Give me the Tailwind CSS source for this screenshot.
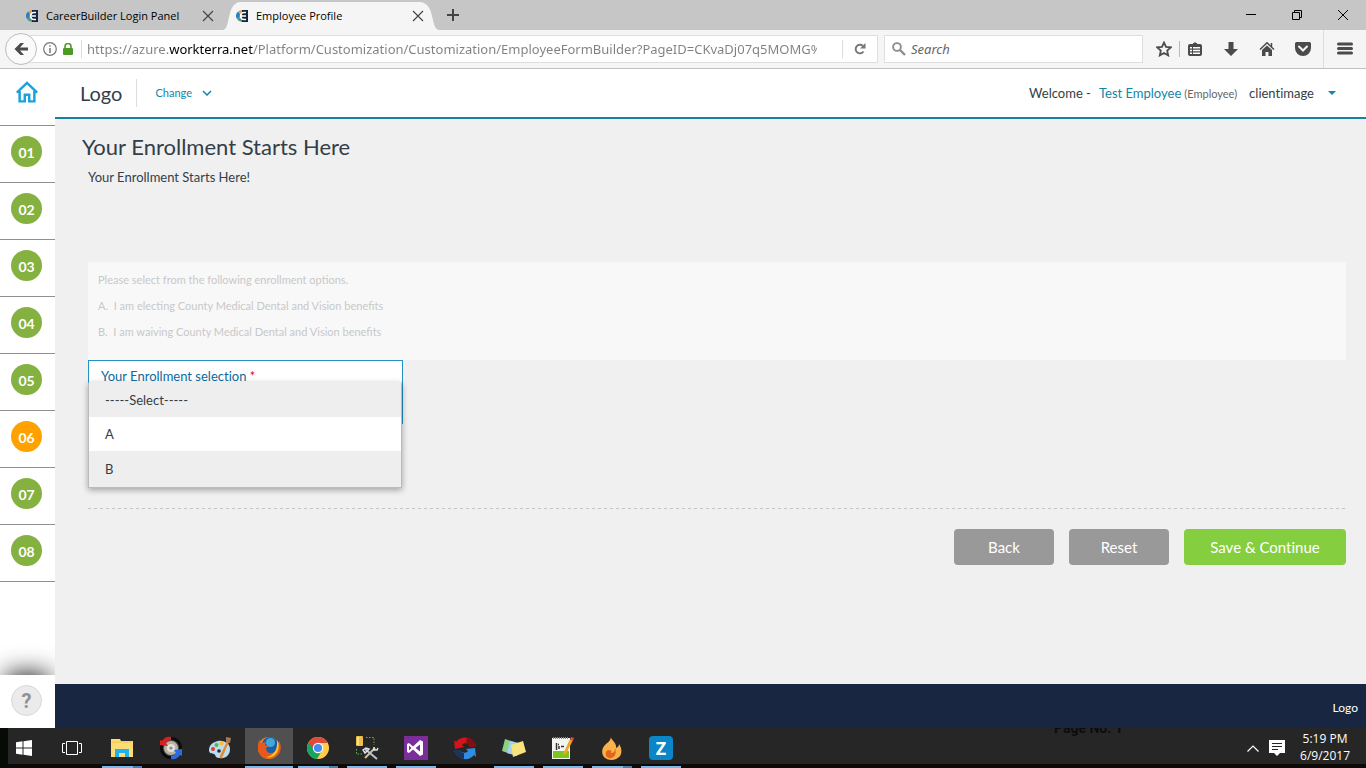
<!DOCTYPE html>
<html lang="en">
<head>
  <meta charset="UTF-8">
  <title>Employee Profile</title>
  <meta name="viewport" content="width=device-width, initial-scale=1.0">
  <script src="https://cdn.jsdelivr.net/npm/@tailwindcss/browser@4"></script>
</head>
<body class="flex flex-col h-screen overflow-hidden bg-[#f0f0f0] font-['Lato',sans-serif] text-[#333e48] [font-variant-ligatures:none]">

<!-- Shared icons -->
<svg class="hidden">
  <symbol id="favicon" viewBox="0 0 12 12">
    <path d="M6 0h6v12H6z" fill="#14263f"/>
    <path d="M6 0A6 6 0 0 0 2 1.500L5 5l1-1z" fill="#e9a13a"/>
    <path d="M2 1.500A6 6 0 0 0 1 9l3-2V4z" fill="#2a7fc0"/>
    <path d="M1 9a6 6 0 0 0 5 3V8L4 7z" fill="#4b9a86"/>
    <path d="M10 2.500H8a3.500 3.500 0 0 0 0 7h2M6 6h4" stroke="#fff" stroke-width="1.600" fill="none"/>
  </symbol>
  <symbol id="close" viewBox="0 0 12 12">
    <path d="M1 1l10 10M11 1L1 11" stroke="currentColor" stroke-width="1.200"/>
  </symbol>
</svg>

<!-- Tab strip -->
<div class="flex items-center h-[30px] shrink-0 bg-[#c6c6c6] font-['Open_Sans','Noto_Sans',sans-serif] text-[11px] text-black">
  <div class="flex items-center w-[223px] h-full pt-[2px] pl-[26px] pr-[9px]">
    <svg class="size-3 mr-2"><use href="#favicon"/></svg>
    <span class="flex-1 whitespace-nowrap">CareerBuilder Login Panel</span>
    <button aria-label="Close tab" class="text-[#444]"><svg class="size-3"><use href="#close"/></svg></button>
  </div>
  <div class="relative flex items-center w-[216px] h-full pt-[2px] pl-[13px] pr-[15px]">
    <svg class="absolute inset-0 size-full" viewBox="0 0 216 30" preserveAspectRatio="none">
      <path d="M0 30C8 29 3 2 18 2H196C213 2 207 29 216 30z" fill="#f5f5f5"/>
    </svg>
    <svg class="relative size-3 mr-2"><use href="#favicon"/></svg>
    <span class="relative flex-1 whitespace-nowrap">Employee Profile</span>
    <button aria-label="Close tab" class="relative text-[#444]"><svg class="size-3"><use href="#close"/></svg></button>
  </div>
  <button aria-label="New tab" class="ml-2">
    <svg class="size-3" viewBox="0 0 12 12"><path d="M6 0v12M0 6h12" stroke="#444" stroke-width="2"/></svg>
  </button>
  <div class="flex items-center gap-9 ml-auto pr-[18px]">
    <button aria-label="Minimize"><svg class="size-[10px]" viewBox="0 0 10 10"><path d="M0 4.500h10" stroke="#000"/></svg></button>
    <button aria-label="Restore">
      <svg class="size-[10px]" viewBox="0 0 10 10"><path d="M.5 2.500h7v7h-7zM2.500 2.500v-2h7v7h-2" stroke="#000" fill="none"/></svg>
    </button>
    <button aria-label="Close window"><svg class="size-[10px]" viewBox="0 0 10 10"><path d="M0 0l10 10M10 0L0 10" stroke="#000"/></svg></button>
  </div>
</div>

<!-- Address bar -->
<div class="flex items-center h-[39px] shrink-0 pl-[5px] bg-[#f5f5f5] border-b border-[#c1c1c1] font-['Noto_Sans','Open_Sans',sans-serif] text-[13px]">
  <button aria-label="Go back" class="relative z-10 flex items-center justify-center size-8 shrink-0 rounded-full border border-[#bdbdbd] bg-[#fafafa]">
    <svg class="w-[14px] h-3" viewBox="0 0 14 12"><path d="M6.500 0H10L6 4.500h8v3H6l4 4.500H6.500L.5 6z" fill="#4b4b4b"/></svg>
  </button>
  <div class="flex items-center flex-1 h-7 -ml-4 pl-[21px] bg-white border border-[#dedede]">
    <svg class="size-[14px] shrink-0" viewBox="0 0 14 14">
      <circle cx="7" cy="7" r="6.300" fill="none" stroke="#777" stroke-width="1.200"/>
      <path d="M7 6v5M7 3.200v1.500" stroke="#777" stroke-width="1.500"/>
    </svg>
    <svg class="w-[10px] h-3 ml-[6px] shrink-0" viewBox="0 0 10 12">
      <path d="M2 6V3.500a3 3 0 0 1 6 0V6" fill="none" stroke="#4d9a26" stroke-width="1.600"/>
      <rect y="5" width="10" height="7" rx="1" fill="#4d9a26"/>
    </svg>
    <span class="w-px h-[18px] ml-2 mr-[5px] bg-[#ddd]"></span>
    <input type="text" aria-label="Address" value="https://azure.workterra.net/Platform/Customization/Customization/EmployeeFormBuilder?PageID=CKvaDj07q5MOMG%"
           class="flex-1 min-w-0 mr-[25px] pt-[2px] outline-none text-transparent bg-clip-text bg-[linear-gradient(90deg,#808080_82px,#000_82px,#000_166px,#808080_166px)]">
    <span class="w-px h-[18px] bg-[#ddd]"></span>
    <button aria-label="Reload" class="flex items-center justify-center w-[34px] h-full">
      <svg class="size-3" viewBox="0 0 12 12"><path d="M9.500 8.500A4.300 4.300 0 1 1 8.800 2.800" fill="none" stroke="#777" stroke-width="1.900"/><path d="M11.500 0v5.500H6z" fill="#777"/></svg>
    </button>
  </div>
  <div class="flex items-center w-[259px] h-7 ml-[6px] pl-[7px] bg-white border border-[#dedede]">
    <svg class="size-[14px] shrink-0" viewBox="0 0 14 14"><circle cx="5" cy="5" r="3.900" fill="none" stroke="#8c8c8c" stroke-width="1.900"/><path d="M8 8l5 5" stroke="#8c8c8c" stroke-width="2.400"/></svg>
    <input type="search" aria-label="Search" placeholder="Search" class="flex-1 min-w-0 ml-[5px] pt-[2px] outline-none italic placeholder:text-[#666]">
  </div>
  <button aria-label="Bookmark this page" class="ml-[13px]">
    <svg class="size-4" viewBox="0 0 16 16"><path d="M8 1.500l2 4.400 4.800.5-3.600 3.200 1 4.800L8 12l-4.200 2.400 1-4.800L1.200 6.400 6 5.900z" fill="none" stroke="#4b4b4b" stroke-width="1.800"/></svg>
  </button>
  <span class="w-px h-4 ml-[7px] mr-2 bg-[#bbb]"></span>
  <button aria-label="Bookmarks list">
    <svg class="w-[14px] h-4" viewBox="0 0 14 16">
      <path d="M5 3V2h1L7 1l1 1h1v1h3a2 2 0 0 1 2 2v8a2 2 0 0 1-2 2H2a2 2 0 0 1-2-2V5a2 2 0 0 1 2-2z" fill="#4b4b4b"/>
      <path d="M2 6h2v1.500H2zM5 6h7v1.500H5zM2 8.700h2v1.500H2zM5 8.700h7v1.500H5zM2 11.400h2v1.500H2zM5 11.400h7v1.500H5z" fill="#fff"/>
    </svg>
  </button>
  <button aria-label="Downloads" class="ml-[22px]">
    <svg class="w-[14px] h-4" viewBox="0 0 14 16"><path d="M4.500 1h5v7H14l-7 7-7-7h4.500z" fill="#4b4b4b"/></svg>
  </button>
  <button aria-label="Home" class="ml-[21px]">
    <svg class="size-4" viewBox="0 0 16 16"><path d="M3 9l5-4.500L13 9v6H9.500v-4h-3v4H3z" fill="#4b4b4b"/><path d="M1 8.500l7-6.700 7 6.700M12.500 2v4" fill="none" stroke="#4b4b4b" stroke-width="1.500"/></svg>
  </button>
  <button aria-label="Save to Pocket" class="ml-5">
    <svg class="size-4" viewBox="0 0 16 16"><path d="M1.500 1h13A1.500 1.500 0 0 1 16 2.500V7A8 8 0 0 1 0 7V2.500A1.500 1.500 0 0 1 1.500 1z" fill="#4b4b4b"/><path d="M4 5.500l4 4 4-4" fill="none" stroke="#f5f5f5" stroke-width="2" stroke-linecap="round"/></svg>
  </button>
  <span class="w-px h-full ml-3 bg-[#ddd]"></span>
  <button aria-label="Open menu" class="ml-[13px] mr-[13px]">
    <svg class="size-4" viewBox="0 0 16 16"><path d="M1.500 3h13M1.500 7.500h13M1.500 12h13" stroke="#4b4b4b" stroke-width="3" stroke-linecap="round"/></svg>
  </button>
</div>

<div class="flex flex-1 min-h-0">

  <!-- Step sidebar -->
  <nav class="flex flex-col w-[55px] shrink-0 bg-white overflow-hidden text-sm font-bold text-white">
    <a href="#" aria-label="Home" class="flex h-[57px] pl-4 pt-3 border-b border-[#919191]">
      <svg class="w-[22px] h-[22px]" viewBox="0 0 23 22">
        <path d="M.8 11.700L11.500 1.500l10.700 10.200M3.800 10v10.800h5.400v-7h4.600v7h5.400V10" fill="none" stroke="#1ba1dc" stroke-width="2.600"/>
      </svg>
    </a>
    <a href="#" class="flex h-[57px] pl-[11px] pt-[10px] border-b border-[#919191]"><span class="size-[31px] rounded-full bg-[#84b140] text-center leading-[34px]">01</span></a>
    <a href="#" class="flex h-[57px] pl-[11px] pt-[10px] border-b border-[#919191]"><span class="size-[31px] rounded-full bg-[#84b140] text-center leading-[34px]">02</span></a>
    <a href="#" class="flex h-[57px] pl-[11px] pt-[10px] border-b border-[#919191]"><span class="size-[31px] rounded-full bg-[#84b140] text-center leading-[34px]">03</span></a>
    <a href="#" class="flex h-[57px] pl-[11px] pt-[10px] border-b border-[#919191]"><span class="size-[31px] rounded-full bg-[#84b140] text-center leading-[34px]">04</span></a>
    <a href="#" class="flex h-[57px] pl-[11px] pt-[10px] border-b border-[#919191]"><span class="size-[31px] rounded-full bg-[#84b140] text-center leading-[34px]">05</span></a>
    <a href="#" class="flex h-[57px] pl-[11px] pt-[10px] border-b border-[#919191]"><span class="size-[31px] rounded-full bg-[#ffa200] text-center leading-[34px]">06</span></a>
    <a href="#" class="flex h-[57px] pl-[11px] pt-[10px] border-b border-[#919191]"><span class="size-[31px] rounded-full bg-[#84b140] text-center leading-[34px]">07</span></a>
    <a href="#" class="flex h-[57px] pl-[11px] pt-[10px] border-b border-[#919191]"><span class="size-[31px] rounded-full bg-[#84b140] text-center leading-[34px]">08</span></a>
    <div class="flex h-[53px] mt-auto pl-[11px] pt-[10px] bg-white shadow-[0_-8px_24px_-6px_#222]">
      <button class="size-[31px] rounded-full border border-[#d8d8d8] bg-[#ebebeb] font-['Roboto',sans-serif] text-xl leading-7 text-[#919191]">?</button>
    </div>
  </nav>

  <div class="flex flex-col flex-1 min-w-0">
    <header class="flex items-center h-[50px] shrink-0 pl-[25px] pr-[30px] bg-white border-b-2 border-[#1681a0] text-[13px]">
      <span class="text-xl">Logo</span>
      <span class="w-px h-7 ml-[14px] mr-[18px] bg-[#ddd]"></span>
      <button class="flex items-center gap-[10px] text-[11px] text-[#0f86ab]">
        Change
        <svg class="w-[10px] h-[6px]" viewBox="0 0 10 6"><path d="M1 1l4 4 4-4" fill="none" stroke="#0f86ab" stroke-width="1.500"/></svg>
      </button>
      <div class="flex items-baseline ml-auto pt-[2px]">
        <span>Welcome -</span>
        <a href="#" class="ml-2 text-[#0f86ab]">Test Employee</a>
        <span class="ml-[3px] text-[11px] text-[#666]">(Employee)</span>
        <span class="ml-3">clientimage</span>
      </div>
      <button aria-label="Account menu" class="ml-[14px]">
        <svg class="w-2 h-1" viewBox="0 0 8 4"><path d="M0 0h8L4 4z" fill="#0f86ab"/></svg>
      </button>
    </header>

    <main class="flex-1 min-h-0 pl-[33px] pr-5 pt-4">
      <h1 class="-ml-[6px] text-[22px] leading-6">Your Enrollment Starts Here</h1>
      <p class="mt-2 text-[13px] leading-5">Your Enrollment Starts Here!</p>

      <div class="h-[98px] mt-[75px] px-[10px] pt-[5px] bg-[#f8f8f8] text-[11px] leading-[26px] text-[#c8c8c8] [font-variant-ligatures:normal]">
        <p>Please select from the following enrollment options.</p>
        <p>A.&nbsp; I am electing County Medical Dental and Vision benefits</p>
        <p>B.&nbsp; I am waiving County Medical Dental and Vision benefits</p>
      </div>

      <form>
        <div class="relative w-[315px] h-16 px-3 pt-[5px] bg-white border border-[#2490c4] text-[13px]">
          <label for="selection" class="block leading-5 text-[#0f6a9b]">Your Enrollment selection <span class="text-[#f00030]">*</span></label>
          <!-- open option list -->
          <select id="selection" size="3" class="absolute -left-px right-0 top-[21px] h-[106px] overflow-hidden appearance-none outline-none bg-white border border-t-0 border-[#bbb] rounded-t-xs shadow-[0_2px_6px_#0005]">
            <option class="h-[35px] px-4 pt-[10px] leading-5 bg-[#eee]">-----Select-----</option>
            <option class="h-[34px] px-4 pt-[9px] leading-5 bg-white">A</option>
            <option class="h-9 px-4 pt-[10px] leading-5 bg-[#eee]">B</option>
          </select>
        </div>
        <svg class="block w-full h-px mt-[84px]"><path d="M0 .5h3000" stroke="#c4c4c4" stroke-dasharray="3 3"/></svg>
        <div class="flex justify-end gap-[15px] mt-5 text-[15px] text-white">
          <button type="button" class="w-[100px] h-9 rounded bg-[#999]">Back</button>
          <button type="reset" class="w-[100px] h-9 rounded bg-[#999]">Reset</button>
          <button type="submit" class="w-[162px] h-9 rounded bg-[#85ce40]">Save &amp; Continue</button>
        </div>
      </form>
    </main>

    <footer class="flex items-center justify-end h-11 shrink-0 pr-2 pt-1 bg-[#182641] text-xs text-white">Logo</footer>
  </div>
</div>

<!-- Taskbar -->
<div class="relative flex h-10 shrink-0 overflow-hidden bg-[linear-gradient(#262626_36px,#0c0906_36px)] font-['Noto_Sans','Open_Sans',sans-serif] text-white">
  <span class="absolute inset-y-0 left-0 w-2 bg-[#070b06]"></span>
  <span class="absolute left-[1054px] -top-2 font-['Roboto',sans-serif] text-sm leading-4 font-bold text-[#0c0c0c]">Page No. 1</span>
  <button aria-label="Start" class="relative flex items-center justify-center w-12">
    <svg class="size-4" viewBox="0 0 16 16"><path d="M0 2.200L6.500 1.300v6.200H0zM7.500 1.200L16 0v7.500H7.500zM0 8.500h6.500v6.200L0 13.800zM7.500 8.500H16V16l-8.500-1.200z" fill="#fff"/></svg>
  </button>
  <button aria-label="Task view" class="flex items-center justify-center w-12">
    <svg class="w-5 h-[14px]" viewBox="0 0 20 14"><path d="M4.500.5h11v13h-11zM3 2.500H.5v9H3M17 2.500h2.500v9H17" fill="none" stroke="#fff"/></svg>
  </button>
  <div class="flex gap-px ml-[2px]">
    <button aria-label="File Explorer" class="relative flex items-center justify-center w-12">
      <svg class="w-[22px] h-[18px]" viewBox="0 0 22 18"><path d="M0 0h9l1 2h12v16H0z" fill="#fddc76"/><path d="M1 3h20" stroke="#f3c54a"/><path d="M4 18v-8h14v8h-4v-4H8v4z" fill="#1fb2f0"/></svg>
      <span class="absolute bottom-0 left-1 w-10 h-[2px] bg-[linear-gradient(90deg,#76b9ed_31px,#4a7fb0_31px)]"></span>
    </button>
    <button aria-label="Disc tool" class="flex items-center justify-center w-12">
      <svg class="size-6" viewBox="0 0 24 24">
        <circle cx="12" cy="12" r="9.500" fill="#555" stroke="#0b0b0b" stroke-width="3"/>
        <circle cx="12" cy="12" r="7" fill="#b9b3a6"/><circle cx="12" cy="12" r="4" fill="#e6e2d8"/><circle cx="12" cy="12" r="1.600" fill="#888"/>
        <path d="M1 4l2 1c2-3 5-5 9-4v3c-2 0-4 1-5 3l2 3-8-1z" fill="#d92121"/>
        <path d="M23 20l-2-1c-2 3-5 5-9 4v-3c2 0 4-1 5-3l-2-3 8-1z" fill="#2d6be0"/>
      </svg>
    </button>
    <button aria-label="Paint" class="flex items-center justify-center w-12">
      <svg class="size-6" viewBox="0 0 24 24">
        <path d="M10 5c7-1 12 3 12 8 0 6-4 10-11 9-4 0-3-3-5-4s-5 0-5-4c0-5 4-8 9-9z" fill="#b9def2"/>
        <circle cx="5" cy="13" r="2" fill="#e23b32"/><circle cx="8.500" cy="9" r="2" fill="#57b64a"/><circle cx="13.500" cy="7.500" r="2" fill="#f2bd2f"/><circle cx="11" cy="15" r="1.800" fill="#262626"/>
        <path d="M19 5l2 1-7 16c-1 1-3 0-2-2z" fill="#e8892b"/><path d="M18 1l5 1-1 5-4-1z" fill="#a97a50"/>
      </svg>
    </button>
    <button aria-label="Firefox" class="relative flex items-center justify-center w-12 bg-[linear-gradient(#505050_36px,#0c0906_36px)]">
      <svg class="size-6" viewBox="0 0 24 24">
        <circle cx="12" cy="12" r="11" fill="#f08a1d"/><circle cx="13" cy="9.500" r="8.500" fill="#1b5fa8"/><circle cx="13.500" cy="6.500" r="4.500" fill="#45a6dd"/>
        <path d="M1 13C1 8 1 6 3 4l1 3 5-1-1 3 4 1-3 2c0 3 2 5 5 5s6-3 7-6l1-6c3 5 2 11-1 14-7 7-20 3-20-6z" fill="#e8571c"/>
        <path d="M20 4c3 5 2 11-2 15-2 2-6 3-9 2 7-1 12-6 11-17z" fill="#f9c72d"/>
      </svg>
      <span class="absolute bottom-0 left-0 w-12 h-[2px] bg-[#76b9ed]"></span>
    </button>
    <button aria-label="Chrome" class="relative flex items-center justify-center w-12">
      <svg class="size-[22px]" viewBox="0 0 22 22">
        <circle cx="11" cy="11" r="11" fill="#ffcd46"/>
        <path d="M11 11L1.500 5.500A11 11 0 0 0 10 22l5-8.500z" fill="#17a45e"/>
        <path d="M11 11H6L1.500 5.500A11 11 0 0 1 20.800 6H11z" fill="#df4b3b"/>
        <circle cx="11" cy="11" r="5.200" fill="#fff"/><circle cx="11" cy="11" r="4.100" fill="#4a8af4"/>
      </svg>
      <span class="absolute bottom-0 left-1 w-10 h-[2px] bg-[linear-gradient(90deg,#76b9ed_31px,#4a7fb0_31px)]"></span>
    </button>
    <button aria-label="Database tools" class="relative flex items-center justify-center w-12">
      <svg class="size-6" viewBox="0 0 24 24">
        <path d="M11 1.500h8V9M1.500 13v5H8" fill="none" stroke="#58b84c" stroke-dasharray="1.500 1.500"/>
        <rect x="1" y="0" width="7" height="10" rx="1" fill="#f0bd45"/><path d="M3 1v8" stroke="#fff0b0" stroke-width="1.500"/>
        <path d="M10 22L20 12" stroke="#d9c08c" stroke-width="2"/><path d="M10 13l12 10" stroke="#b7c3cf" stroke-width="2"/>
        <path d="M8 14l3-2 3 1-4 4zM19 11v3h3l1-2" fill="none" stroke="#dbe4ec" stroke-width="1.500"/>
      </svg>
      <span class="absolute bottom-0 left-1 w-10 h-[2px] bg-[#76b9ed]"></span>
    </button>
    <button aria-label="Visual Studio" class="relative flex items-center justify-center w-12">
      <svg class="size-6" viewBox="0 0 24 24">
        <rect width="24" height="24" fill="#7b2d9b"/>
        <path d="M3 8l2-1 4 3.500L16 4l3 1.500v13L16 20l-7-6.500L5 17l-2-1zM5 9.500v5L7.500 12zM16 8.500L11.500 12l4.500 3.500z" fill="#fff" fill-rule="evenodd"/>
      </svg>
      <span class="absolute bottom-0 left-1 w-10 h-[2px] bg-[#76b9ed]"></span>
    </button>
    <button aria-label="Sync" class="flex items-center justify-center w-12">
      <svg class="size-6" viewBox="0 0 24 24">
        <path d="M1 4l2 2C8-1 20 0 23 10l-6 1c-1-4-6-5-8-2l2 2-9 2z" fill="#d41418"/>
        <path d="M14 1c5 1 8 4 9 9l-6 1c-1-2-2-3-4-3z" fill="#811015"/>
        <path d="M23 21l-2-2C16 26 4 24 1 14h6c1 3 6 4 8 1l-2-2 9-1z" fill="#2f8de4"/>
        <path d="M1 14h6c1 2 2 3 4 3v6c-5-1-9-4-10-9z" fill="#1d335a"/>
      </svg>
    </button>
    <button aria-label="Notes" class="relative flex items-center justify-center w-12">
      <svg class="w-6 h-5" viewBox="0 0 24 20"><path d="M3 1l9 3-3 12-9-3z" fill="#8fd088"/><path d="M8 3l9 2-2 13-10-3z" fill="#a5d2ee"/><path d="M9 7l12-4 3 11-13 5z" fill="#f9e37c"/></svg>
      <span class="absolute bottom-0 left-1 w-10 h-[2px] bg-[#76b9ed]"></span>
    </button>
    <button aria-label="Notepad++" class="relative flex items-center justify-center w-12">
      <svg class="size-6" viewBox="0 0 24 24">
        <rect x="1" y="2" width="18" height="21" fill="#f5f5ef"/><path d="M2 15h16v7H2z" fill="#7cc51e"/>
        <path d="M2 2h16" stroke="#888" stroke-dasharray="1 1" stroke-width="2"/><path d="M5.500 7v7M7 8.500h1M8 10v3M10 10.500h3" stroke="#333" stroke-width="1.500"/>
        <path d="M19 3l3 1-7 14-3 1 1-3z" fill="#efa624"/><path d="M20 1l3 1-1 3-3-1z" fill="#dc4f3f"/>
      </svg>
      <span class="absolute bottom-0 left-1 w-10 h-[2px] bg-[#76b9ed]"></span>
    </button>
    <button aria-label="Burner" class="relative flex items-center justify-center w-12">
      <svg class="w-5 h-6" viewBox="0 0 20 24">
        <path d="M9 0c-1 4 6 6 5 12 2-1 3-2 3-4 3 4 3 9 1 12-4 5-12 5-16 1-3-4-2-9 1-12 3-3 6-4 6-9z" fill="#f9b14b"/>
        <path d="M13 12c1 3 1 5 0 7-2 4-7 4-9 1-1-3 0-6 3-6 2 0 3 1 2 3 3 0 4-2 4-5z" fill="#e3641c"/>
      </svg>
      <span class="absolute bottom-0 left-1 w-10 h-[2px] bg-[linear-gradient(90deg,#76b9ed_31px,#4a7fb0_31px)]"></span>
    </button>
    <button aria-label="Z app" class="relative flex items-center justify-center w-12">
      <span class="flex items-center justify-center size-6 rounded-sm bg-[#0a85c7] text-lg font-bold">Z</span>
      <span class="absolute bottom-0 left-1 w-10 h-[2px] bg-[#76b9ed]"></span>
    </button>
  </div>
  <div class="relative flex items-center ml-auto pr-4">
    <button aria-label="Show hidden icons"><svg class="w-3 h-[7px]" viewBox="0 0 12 7"><path d="M.5 6.500L6 1l5.500 5.500" fill="none" stroke="#fff" stroke-width="1.200"/></svg></button>
    <button aria-label="Notifications" class="ml-[10px]">
      <svg class="size-4" viewBox="0 0 16 16"><path d="M0 0h16v13h-5l-3 3-3-3H0z" fill="#fff"/><path d="M3 3.500h10M3 6.500h10M3 9.500h6" stroke="#262626"/></svg>
    </button>
    <div class="ml-[15px] pb-[2px] font-['Open_Sans',sans-serif] text-xs leading-[17px] text-center"><p>5:19 PM</p><p>6/9/2017</p></div>
  </div>
</div>

</body>
</html>
